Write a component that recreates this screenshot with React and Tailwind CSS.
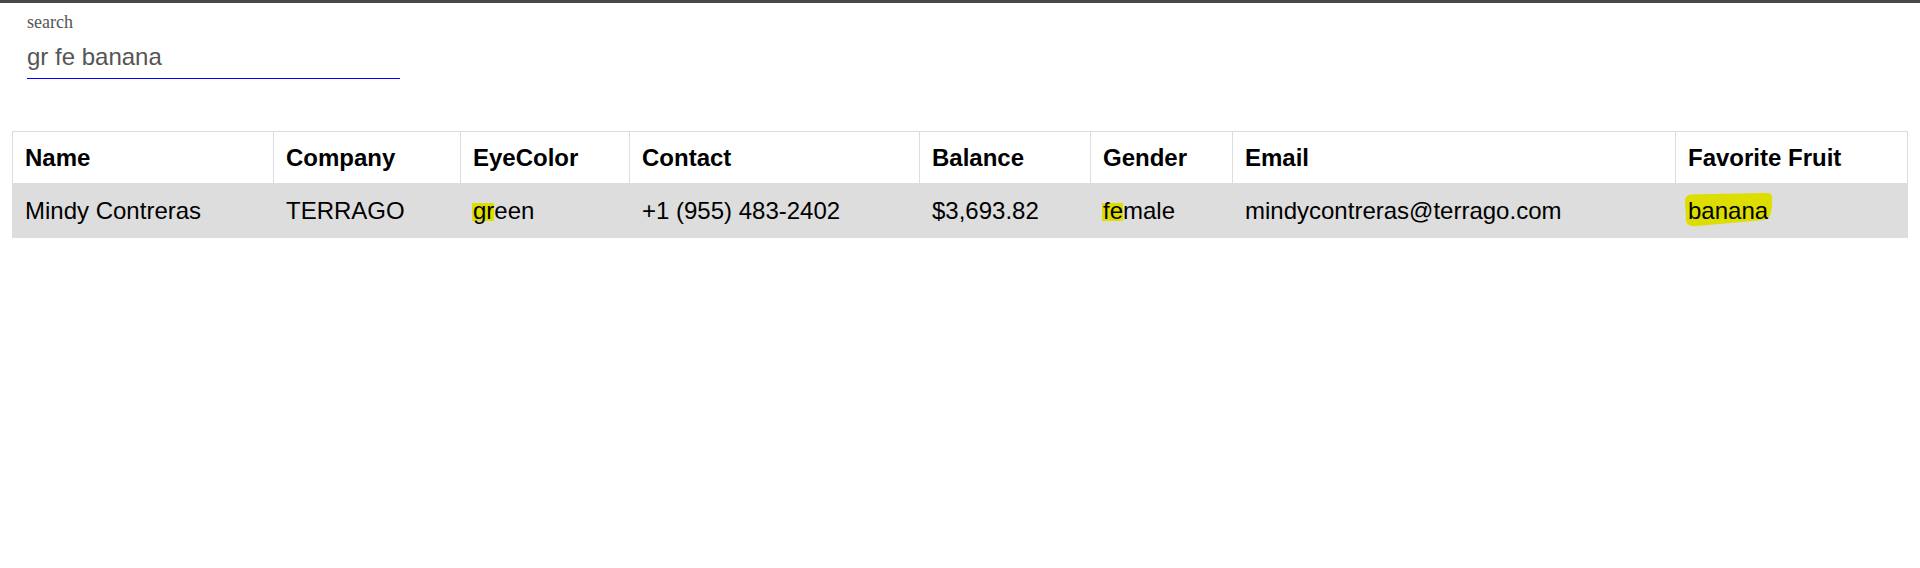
import React from "react";

const font = { fontFamily: '"Liberation Sans", Arial, sans-serif' };

function Mark({ children }) {
  return (
    <span className="relative inline-block">
      <span className="absolute left-[-1px] right-0 top-[6px] h-[18px] bg-[#dddd00]" />
      <span className="relative">{children}</span>
    </span>
  );
}

function Blob({ children }) {
  return (
    <span className="relative inline-block">
      <svg
        className="absolute left-[-3px] top-[-4px] w-[87px] h-[34px]"
        viewBox="0 0 87 34"
        aria-hidden="true"
      >
        <path
          d="M2,3 C4,1 8,1.5 14,1.2 L82,0 C86,0 87,2 87,6 L87,13 C86,22 84,26 79,27 L12,33 C4,34 1,31 1,26 L0,9 C0,6 1,4 2,3 Z"
          fill="#dddd00"
        />
      </svg>
      <span className="relative">{children}</span>
    </span>
  );
}

const headers = [
  ["Name", "w-[261px]"],
  ["Company", "w-[187px]"],
  ["EyeColor", "w-[169px]"],
  ["Contact", "w-[290px]"],
  ["Balance", "w-[171px]"],
  ["Gender", "w-[142px]"],
  ["Email", "w-[443px]"],
  ["Favorite Fruit", "w-[232px]"],
];

export default function App() {
  return (
    <div className="min-h-[568px] bg-white" style={font}>
      <div className="h-[3px] bg-[#494949]" />
      <div className="pl-[27px] pt-[9px]">
        <label
          htmlFor="search"
          className="block text-[18px] leading-[20px] text-[#555555]"
          style={{ fontFamily: '"Liberation Serif", "Times New Roman", serif' }}
        >
          search
        </label>
        <input
          id="search"
          readOnly
          defaultValue="gr fe banana"
          className="mt-[11px] block w-[373px] h-[36px] p-0 pb-[7px] border-0 border-b border-[#0000ff] outline-none text-[24px] leading-[28px] text-[#555555] bg-transparent"
          style={font}
        />
      </div>
      <div className="pl-[12px] pr-[13px] mt-[52px]">
        <table className="w-full table-fixed border-collapse text-[24px] text-black">
          <colgroup>
            {headers.map(([h, w]) => (
              <col key={h} className={w} />
            ))}
          </colgroup>
          <thead>
            <tr className="h-[52px]">
              {headers.map(([h]) => (
                <th
                  key={h}
                  className="border border-[#dddddd] px-[12px] py-0 text-left font-bold leading-[27px] align-middle"
                >
                  {h}
                </th>
              ))}
            </tr>
          </thead>
          <tbody>
            <tr className="h-[54px] bg-[#dddddd]">
              <td className="border border-[#dddddd] px-[12px] py-0 leading-[27px] whitespace-nowrap">Mindy Contreras</td>
              <td className="border border-[#dddddd] px-[12px] py-0 leading-[27px] whitespace-nowrap">TERRAGO</td>
              <td className="border border-[#dddddd] px-[12px] py-0 leading-[27px] whitespace-nowrap">
                <Mark>gr</Mark>een
              </td>
              <td className="border border-[#dddddd] px-[12px] py-0 leading-[27px] whitespace-nowrap">+1 (955) 483-2402</td>
              <td className="border border-[#dddddd] px-[12px] py-0 leading-[27px] whitespace-nowrap">$3,693.82</td>
              <td className="border border-[#dddddd] px-[12px] py-0 leading-[27px] whitespace-nowrap">
                <Mark>fe</Mark>male
              </td>
              <td className="border border-[#dddddd] px-[12px] py-0 leading-[27px] whitespace-nowrap">mindycontreras@terrago.com</td>
              <td className="border border-[#dddddd] px-[12px] py-0 leading-[27px] whitespace-nowrap">
                <Blob>banana</Blob>
              </td>
            </tr>
          </tbody>
        </table>
      </div>
    </div>
  );
}
